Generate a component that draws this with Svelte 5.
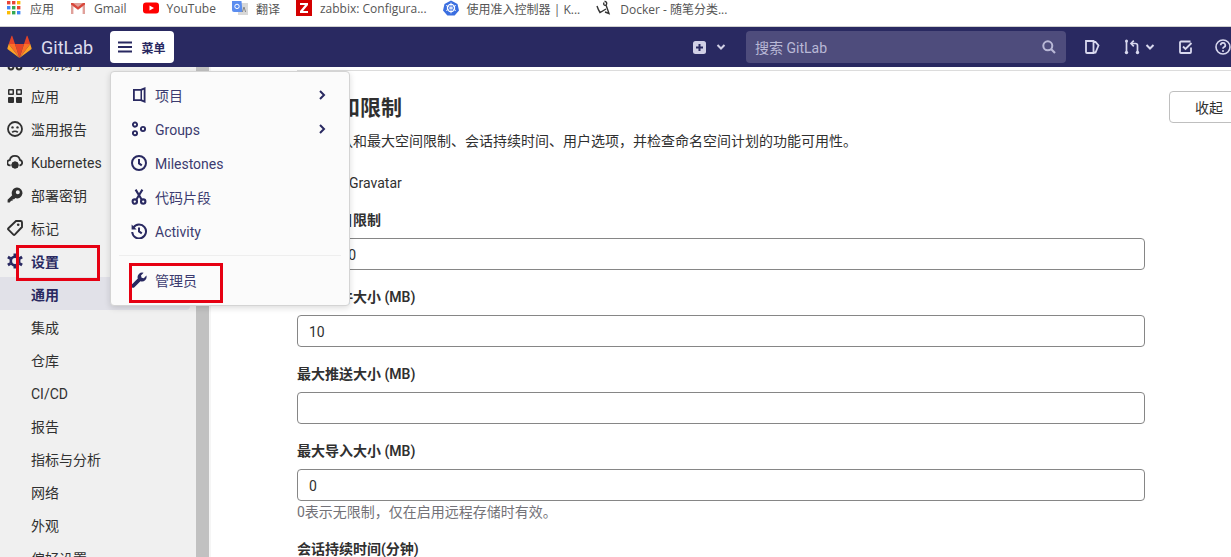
<script>
	const bookmarks = [
		{ icon: 'apps', label: '应用' },
		{ icon: 'gmail', label: 'Gmail' },
		{ icon: 'youtube', label: 'YouTube' },
		{ icon: 'translate', label: '翻译' },
		{ icon: 'zabbix', label: 'zabbix: Configura...' },
		{ icon: 'k8s', label: '使用准入控制器 | K...' },
		{ icon: 'docker', label: 'Docker - 随笔分类...' }
	];

	const icons = {
		hook: '<circle cx="4" cy="12" r="2.4" fill="none" stroke="currentColor" stroke-width="2"/><circle cx="12" cy="12" r="2.4" fill="none" stroke="currentColor" stroke-width="2"/><circle cx="8" cy="4" r="2.4" fill="none" stroke="currentColor" stroke-width="2"/>',
		apps: '<path fill="currentColor" fill-rule="evenodd" d="M2 1h4a1 1 0 0 1 1 1v4a1 1 0 0 1-1 1H2a1 1 0 0 1-1-1V2a1 1 0 0 1 1-1zm.5 1.5v3h3v-3zM10 1h4a1 1 0 0 1 1 1v4a1 1 0 0 1-1 1h-4a1 1 0 0 1-1-1V2a1 1 0 0 1 1-1zm.5 1.5v3h3v-3z"/><rect x="1" y="9" width="6" height="6" rx="1" fill="currentColor"/><rect x="9" y="9" width="6" height="6" rx="1" fill="currentColor"/>',
		abuse: '<circle cx="8" cy="8" r="7" fill="none" stroke="currentColor" stroke-width="1.8"/><circle cx="5.5" cy="6.4" r="1.2" fill="currentColor"/><circle cx="10.5" cy="6.4" r="1.2" fill="currentColor"/><path d="M5.2 11.4c1.4-1.6 4.2-1.6 5.6 0" fill="none" stroke="currentColor" stroke-width="1.6"/>',
		cloud: '<path d="M3.6 11.4H3A2.6 2.6 0 0 1 2.8 6.2a5.2 5.2 0 0 1 10.2-.2 2.8 2.8 0 0 1 .2 5.4h-.8" fill="none" stroke="currentColor" stroke-width="1.8"/><circle cx="8" cy="11" r="2.2" fill="none" stroke="currentColor" stroke-width="2.8"/><path d="M8 7.4v7.2M4.4 11h7.200M5.500 8.500l5 5M10.500 8.500l-5 5" stroke="currentColor" stroke-width="1.200"/>',
		key: '<path fill="currentColor" fill-rule="evenodd" d="M10 .6a5.4 5.4 0 1 1-1.700 10.500L7.200 12.200H5.600v1.600H4L2.800 15.400H.6v-2.600l4.600-4.500A5.400 5.400 0 0 1 10 .6zm.8 2.600a2 2 0 1 0 0 4 2 2 0 0 0 0-4z"/>',
		label: '<path d="M9 1h4.600A1.400 1.400 0 0 1 15 2.400V7L7.800 14.600a1 1 0 0 1-1.400 0L1.400 9.600a1 1 0 0 1 0-1.400z" fill="none" stroke="currentColor" stroke-width="1.900"/><circle cx="11.200" cy="4.800" r="1.300" fill="currentColor"/>',
		gear: '<circle cx="8" cy="8" r="4.200" fill="none" stroke="currentColor" stroke-width="2.600"/><path d="M8 .5v3M8 12.500v3M.9 4l2.600 1.500M12.500 10.500l2.600 1.500M.9 12l2.600-1.500M12.500 5.500 15.100 4" fill="none" stroke="currentColor" stroke-width="3"/>',
		project: '<path fill="currentColor" fill-rule="evenodd" d="M2 2h7.500L14.500 0v16l-5-2H2zM3.800 3.800v8.400h5.700V3.800zM11 3.500v9l1.700.7V2.800z"/>',
		groups: '<g fill="none" stroke="currentColor" stroke-width="1.900"><circle cx="4" cy="3.600" r="2.100"/><circle cx="4" cy="12.200" r="2.100"/><circle cx="12" cy="8" r="2.100"/></g>',
		clock: '<circle cx="8" cy="8" r="7" fill="none" stroke="currentColor" stroke-width="2"/><path d="M8 4v4.400l2.800 2" fill="none" stroke="currentColor" stroke-width="2"/>',
		snippet: '<g fill="none" stroke="currentColor" stroke-width="2.100"><circle cx="3.800" cy="12.600" r="2.200"/><circle cx="12.200" cy="12.600" r="2.200"/><path d="M5.200 10.800 11.400.6M10.800 10.800 4.600.6"/></g>',
		history: '<path d="M2.400 4.600A6.900 6.900 0 1 1 1.200 9" fill="none" stroke="currentColor" stroke-width="2"/><path d="M.6 1.600v5h5z" fill="currentColor"/><path d="M8 4.400v4l2.800 2" fill="none" stroke="currentColor" stroke-width="2"/>',
		wrench: '<path fill="currentColor" d="M15.400 3.600 12.800 6.200l-2.200-.5-.6-2.200L12.600.8A4.600 4.600 0 0 0 6.800 6.600L.8 12.600a1.800 1.800 0 0 0 2.600 2.600l6-6a4.600 4.600 0 0 0 6-5.600z"/>'
	};

	const sideItems = [
		{ label: '系统钩子', icon: 'hook' },
		{ label: '应用', icon: 'apps' },
		{ label: '滥用报告', icon: 'abuse' },
		{ label: 'Kubernetes', icon: 'cloud', latin: true },
		{ label: '部署密钥', icon: 'key' },
		{ label: '标记', icon: 'label' },
		{ label: '设置', icon: 'gear', head: true },
		{ label: '通用', active: true },
		{ label: '集成' },
		{ label: '仓库' },
		{ label: 'CI/CD', latin: true },
		{ label: '报告' },
		{ label: '指标与分析' },
		{ label: '网络' },
		{ label: '外观' },
		{ label: '偏好设置' }
	];

	const menuItems = [
		{ label: '项目', icon: 'project', more: true },
		{ label: 'Groups', icon: 'groups', more: true, latin: true },
		{ label: 'Milestones', icon: 'clock', latin: true },
		{ label: '代码片段', icon: 'snippet' },
		{ label: 'Activity', icon: 'history', latin: true }
	];

	const fields = [
		{ label: '默认项目限制', value: '100000' },
		{ label: '最大附件大小 (MB)', value: '10' },
		{ label: '最大推送大小 (MB)', value: '' },
		{ label: '最大导入大小 (MB)', value: '0', help: '0表示无限制，仅在启用远程存储时有效。' }
	];
</script>

{#snippet favicon(name)}
	<svg class="fav" viewBox="0 0 16 16" aria-hidden="true">
		{#if name === 'apps'}
			{#each [['#ea4335', '#ea4335', '#fbbc05'], ['#4285f4', '#34a853', '#ea4335'], ['#fbbc05', '#34a853', '#4285f4']] as row, y}
				{#each row as c, x}
					<rect x={1 + x * 5} y={1 + y * 5} width="3.4" height="3.4" fill={c} />
				{/each}
			{/each}
		{:else if name === 'gmail'}
			<path d="M1 3h14v11h-2.4V6.6L8 10 3.4 6.6V14H1z" fill="#e0a09a" />
			<path d="M1 3h2l5 4 5-4h2v1.6L8 9.6 1 4.6z" fill="#d9463a" />
		{:else if name === 'youtube'}
			<rect x="0" y="2.5" width="16" height="11" rx="3" fill="#f00" />
			<path d="M6.5 5.5 11 8l-4.5 2.5z" fill="#fff" />
		{:else if name === 'translate'}
			<rect x="6" y="3" width="10" height="12" fill="#d8d8d8" />
			<path d="M0 1h9.5l1 11H2a2 2 0 0 1-2-2z" fill="#5b8def" />
			<circle cx="5" cy="6.4" r="2.2" fill="none" stroke="#fff" stroke-width="1" />
			<path d="M12 7l-1.6 5M12 7l1.6 5" stroke="#888" />
		{:else if name === 'zabbix'}
			<rect width="16" height="16" fill="#d40000" />
			<path d="M4 3h8v2L7 11h5v2H4v-2l5-6H4z" fill="#fff" />
		{:else if name === 'k8s'}
			<path d="M8 .5 14.5 4 16 10.5 11.6 15.5H4.4L0 10.5 1.5 4z" fill="#3a6ee0" />
			<circle cx="8" cy="8" r="3.6" fill="none" stroke="#fff" stroke-width="1.2" />
			<path d="M8 2.6v10.8M3 5.4l10 5.2M13 5.4 3 10.6" stroke="#fff" stroke-width=".8" />
		{:else}
			<path d="M1 6c1 3 2 5 3 6.500L10 9M8.500 1.500c2-.5 3 2 1.500 3.500-1.500 1-3-.5-2-2.500M10 5l3 8.500-4-1.500" fill="none" stroke="#333" stroke-width="1.400" />
		{/if}
	</svg>
{/snippet}

{#snippet icon(name, size = 16)}
	<svg class="ico" width={size} height={size} viewBox="0 0 16 16" aria-hidden="true">{@html icons[name]}</svg>
{/snippet}

{#snippet chevronDown()}
	<svg class="chev" width="10" height="10" viewBox="0 0 10 10" aria-hidden="true"><path d="M1.5 3 5 6.5 8.5 3" fill="none" stroke="currentColor" stroke-width="2" /></svg>
{/snippet}

<div class="page">
	<nav class="bookmarks">
		{#each bookmarks as b}
			<span class="bookmark">{@render favicon(b.icon)}<span class="bm-text">{b.label}</span></span>
		{/each}
	</nav>

	<header class="topbar">
		<svg class="logo" width="25" height="24" viewBox="0 0 25 24" aria-hidden="true">
			<path d="M12.5 23 17 9H8z" fill="#e24329" />
			<path d="M12.5 23 8 9H1.7z" fill="#fc6d26" />
			<path d="M1.7 9 .4 13.3c-.1.4 0 .8.3 1L12.5 23z" fill="#fca326" />
			<path d="M1.7 9H8L5.3 1c-.1-.4-.7-.4-.8 0z" fill="#e24329" />
			<path d="M12.5 23 17 9h6.3z" fill="#fc6d26" />
			<path d="M23.3 9l1.3 4.3c.1.4 0 .8-.3 1L12.5 23z" fill="#fca326" />
			<path d="M23.3 9H17l2.7-8c.1-.4.7-.4.8 0z" fill="#e24329" />
		</svg>
		<span class="brand">GitLab</span>
		<button class="menu-btn">
			<svg width="14" height="12" viewBox="0 0 14 12" aria-hidden="true"><path d="M0 1.5h14M0 6h14M0 10.5h14" stroke="currentColor" stroke-width="2" /></svg>
			菜单
		</button>
		<div class="spacer"></div>
		<div class="new-btn">
			<svg width="13" height="13" viewBox="0 0 13 13" aria-hidden="true"><rect width="13" height="13" rx="2.5" fill="currentColor" /><path d="M6.5 3v7M3 6.5h7" stroke="#292961" stroke-width="2" /></svg>
			{@render chevronDown()}
		</div>
		<div class="search">
			<span>搜索 GitLab</span>
			<svg width="14" height="14" viewBox="0 0 14 14" aria-hidden="true"><circle cx="5.8" cy="5.8" r="4.5" fill="none" stroke="currentColor" stroke-width="2" /><path d="m9 9 4 4" stroke="currentColor" stroke-width="2.2" /></svg>
		</div>
		<div class="top-icons">
			<svg width="16" height="16" viewBox="0 0 16 16" aria-hidden="true"><path d="M2 2h7.5v12H3a1 1 0 0 1-1-1zM9.500 3h2l3 3.500-3 7h-2" fill="none" stroke="currentColor" stroke-width="1.8" /></svg>
			<div class="mr">
				<svg width="16" height="16" viewBox="0 0 16 16" aria-hidden="true"><g fill="none" stroke="currentColor" stroke-width="1.7"><path d="M2.5 2v10M13.5 13V6.5a2 2 0 0 0-2-2H8" /><path d="M9.8 1.6 7 4.5l2.8 2.9" /></g><circle cx="2.5" cy="13.5" r="1.7" fill="currentColor" /><circle cx="2.5" cy="2" r="1.5" fill="currentColor" /><circle cx="13.5" cy="13.5" r="1.7" fill="currentColor" /></svg>
				{@render chevronDown()}
			</div>
			<svg width="14" height="14" viewBox="0 0 14 14" aria-hidden="true"><path d="M12 7.5V12a1 1 0 0 1-1 1H2a1 1 0 0 1-1-1V2.500a1 1 0 0 1 1-1h9.500" fill="none" stroke="currentColor" stroke-width="1.8" /><path d="m4 6.500 2.500 2.500L12.500 3" fill="none" stroke="currentColor" stroke-width="1.8" /></svg>
			<svg class="help" width="16" height="16" viewBox="0 0 16 16" aria-hidden="true"><circle cx="8" cy="8" r="7" fill="none" stroke="currentColor" stroke-width="1.6" /><path d="M5.700 6.200A2.300 2.300 0 1 1 8.800 8.300c-.6.3-.8.7-.8 1.400" fill="none" stroke="currentColor" stroke-width="1.7" /><circle cx="8" cy="12" r="1" fill="currentColor" /></svg>
		</div>
	</header>

	<div class="body">
		<aside class="sidebar">
			<ul>
				{#each sideItems as item}
					<li class:head={item.head} class:active={item.active}>
						<span class="side-icon">{#if item.icon}{@render icon(item.icon, 16)}{/if}</span>
						<span class:latin={item.latin}>{item.label}</span>
					</li>
				{/each}
			</ul>
		</aside>
		<div class="scrollbar"></div>

		<main class="content">
			<section class="settings">
				<div class="form">
					<h4>账户和限制</h4>
					<p class="desc">设置默认和最大空间限制、会话持续时间、用户选项，并检查命名空间计划的功能可用性。</p>
					<label class="check"><input type="checkbox" />启用Gravatar</label>
					{#each fields as f}
						<div class="field">
							<div class="field-label">{f.label}</div>
							<input type="text" value={f.value} readonly />
							{#if f.help}<div class="help-text">{f.help}</div>{/if}
						</div>
					{/each}
					<div class="field"><div class="field-label">会话持续时间(分钟)</div></div>
				</div>
				<button class="collapse">收起</button>
			</section>
		</main>
	</div>

	<div class="dropdown">
		{#each menuItems as m}
			<div class="menu-item">
				{@render icon(m.icon, 16)}
				<span class="menu-label" class:latin={m.latin}>{m.label}</span>
				{#if m.more}
					<svg class="more" width="8" height="10" viewBox="0 0 8 10" aria-hidden="true"><path d="M2 1l4 4-4 4" fill="none" stroke="currentColor" stroke-width="2" /></svg>
				{/if}
			</div>
		{/each}
		<div class="divider"></div>
		<div class="menu-item admin">
			{@render icon('wrench', 16)}
			<span class="menu-label">管理员</span>
		</div>
	</div>

	<div class="mark mark-settings"></div>
	<div class="mark mark-admin"></div>
</div>

<style>
	:global(body) {
		margin: 0;
		background: #fff;
	}

	.page {
		position: relative;
		width: 1231px;
		height: 557px;
		overflow: hidden;
		display: flex;
		flex-direction: column;
		font-family: Roboto, 'Noto Sans CJK SC', sans-serif;
		font-size: 14px;
		color: #303030;
	}

	.bookmarks {
		height: 16px;
		flex: none;
		display: flex;
		align-items: center;
		gap: 16px;
		padding: 0 0 10px 6px;
		background: #fff;
		border-bottom: 1px solid #d0d0d0;
		font-family: 'Open Sans', 'Noto Sans CJK SC', sans-serif;
		font-size: 12px;
		color: #555;
		white-space: nowrap;
	}

	.bookmark {
		display: flex;
		align-items: center;
		gap: 8px;
	}

	.bm-text {
		padding-top: 1px;
	}

	.fav {
		width: 16px;
		height: 16px;
		flex: none;
	}

	.topbar {
		flex: none;
		height: 40px;
		display: flex;
		align-items: center;
		background: #292961;
		color: #d1d0e6;
		padding-left: 7px;
	}

	.logo {
		flex: none;
	}

	.brand {
		margin-left: 9px;
		width: 69px;
		font-size: 18px;
		color: #dcdcee;
	}

	.menu-btn {
		width: 64px;
		height: 32px;
		display: flex;
		align-items: center;
		justify-content: center;
		gap: 9px;
		border: 0;
		padding: 0;
		border-radius: 4px;
		background: #fff;
		color: #292961;
		font: 600 12px Roboto, 'Noto Sans CJK SC', sans-serif;
	}

	.spacer {
		flex: 1;
	}

	.new-btn {
		display: flex;
		align-items: center;
		gap: 10px;
		margin-right: 20px;
	}

	.search {
		width: 320px;
		height: 32px;
		box-sizing: border-box;
		display: flex;
		align-items: center;
		justify-content: space-between;
		padding: 0 10px 0 9px;
		border-radius: 4px;
		background: #4e4c7c;
		color: #b9b8d6;
	}

	.top-icons {
		display: flex;
		align-items: center;
		gap: 24px;
		width: 165px;
		flex: none;
		padding-left: 18px;
		box-sizing: border-box;
		color: #d8d8ee;
	}

	.mr {
		display: flex;
		align-items: center;
		gap: 5px;
	}

	.top-icons svg {
		flex: none;
	}

	.help {
		margin-left: -2px;
	}

	.body {
		flex: 1;
		min-height: 0;
		display: flex;
	}

	.sidebar {
		width: 196px;
		flex: none;
		background: #f0f0f0;
		overflow: hidden;
	}

	.sidebar ul {
		list-style: none;
		margin: -21px 0 0;
		padding: 0;
	}

	.sidebar li {
		height: 33px;
		display: flex;
		align-items: center;
		color: #303030;
		white-space: nowrap;
	}

	/* Roboto sits a pixel high next to the CJK rows */
	.latin {
		padding-top: 2px;
	}

	.side-icon {
		width: 31px;
		flex: none;
		display: flex;
		padding-left: 7px;
		box-sizing: border-box;
	}

	.sidebar li.head {
		color: #292961;
		font-weight: 600;
	}

	.sidebar li.active {
		width: 190px;
		background: #e1e1e8;
		border-radius: 0 4px 4px 0;
		color: #292961;
		font-weight: 600;
	}

	.scrollbar {
		width: 13px;
		flex: none;
		background: #c1c1c1;
	}

	.content {
		flex: 1;
		min-width: 0;
		overflow: hidden;
		padding: 3px 0 0 86px;
		border-left: 2px solid #f5f5f5;
	}

	.settings {
		display: flex;
		align-items: flex-start;
		gap: 24px;
		padding-top: 20px;
		border-top: 1px solid #dcdcdc;
	}

	.form {
		width: 848px;
		flex: none;
	}

	h4 {
		margin: 1px 0 0;
		font-size: 21px;
		line-height: 32px;
		font-weight: 600;
	}

	.desc {
		margin: 0;
		line-height: 20px;
		padding-top: 7px;
	}

	.check {
		display: flex;
		align-items: center;
		margin: 22px 0 17px;
		line-height: 20px;
	}

	.check input {
		margin: 0 10px 0 0;
		width: 14px;
		height: 14px;
	}

	.field {
		margin-bottom: 17px;
	}

	.field-label {
		font-weight: 600;
		line-height: 20px;
		margin-bottom: 8px;
		white-space: nowrap;
	}

	.field input {
		display: block;
		width: 100%;
		height: 32px;
		box-sizing: border-box;
		padding: 1px 11px 0;
		border: 1px solid #868686;
		border-radius: 4px;
		background: #fff;
		color: #303030;
		font: inherit;
		outline: none;
	}

	.help-text {
		margin-top: 1px;
		line-height: 20px;
		color: #737278;
	}

	.collapse {
		width: 80px;
		height: 32px;
		flex: none;
		padding: 0;
		background: #fff;
		border: 1px solid #bfbfbf;
		border-radius: 4px;
		color: #303030;
		font: inherit;
	}

	/* menu opened from the top bar */
	.dropdown {
		position: absolute;
		left: 110px;
		top: 71px;
		width: 240px;
		height: 235px;
		box-sizing: border-box;
		padding: 6px 0;
		background: #fbfbfb;
		border: 1px solid #d4d4d4;
		border-radius: 4px;
		box-shadow: 0 2px 6px rgba(0, 0, 0, 0.14);
		color: #292961;
	}

	.menu-item {
		height: 34px;
		display: flex;
		align-items: center;
		padding: 0 23px 0 20px;
		gap: 8px;
	}

	.menu-label {
		flex: 1;
		color: #3c3b70;
	}

	.divider {
		height: 1px;
		margin: 7px 8px 7px;
		background: #eee;
	}

	.mark {
		position: absolute;
		box-sizing: border-box;
		border: 3px solid #e60012;
	}

	.mark-settings {
		left: 16px;
		top: 245px;
		width: 84px;
		height: 36px;
	}

	.mark-admin {
		left: 129px;
		top: 263px;
		width: 94px;
		height: 40px;
	}
</style>
